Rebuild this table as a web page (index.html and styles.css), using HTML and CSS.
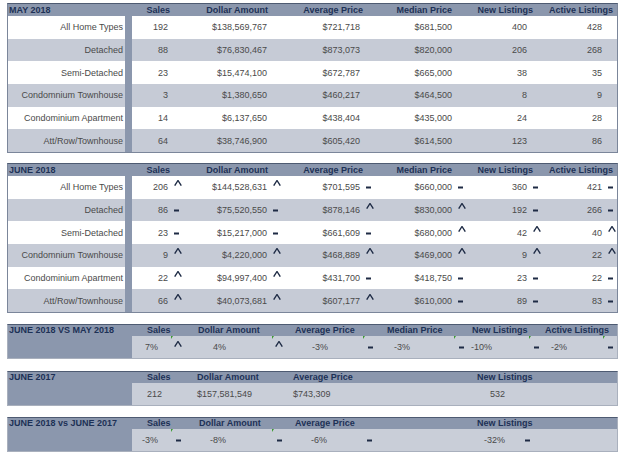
FILE: index.html
```html
<!DOCTYPE html>
<html>
<head>
<meta charset="utf-8">
<link rel="stylesheet" href="styles.css">
</head>
<body>
<svg class="defs" aria-hidden="true"><symbol id="up" viewBox="0 0 8 6"><path d="M0.7 5.7 L4 0.5 L7.3 5.7" fill="none" stroke="currentColor" stroke-width="1.35"/></symbol></svg>

<div class="tbl">
  <div class="thead"><div class="t">MAY 2018</div><div>Sales</div><div>Dollar Amount</div><div>Average Price</div><div>Median Price</div><div>New Listings</div><div>Active Listings</div><div></div></div>
  <div class="tbody">
    <div class="trow"><div class="lbl">All Home Types</div><div class="sep"></div><div class="v">192</div><div class="i"></div><div class="v">$138,569,767</div><div class="i"></div><div class="v">$721,718</div><div class="i"></div><div class="v">$681,500</div><div class="i"></div><div class="v">400</div><div class="i"></div><div class="v">428</div><div class="i"></div></div>
    <div class="trow"><div class="lbl">Detached</div><div class="sep"></div><div class="v">88</div><div class="i"></div><div class="v">$76,830,467</div><div class="i"></div><div class="v">$873,073</div><div class="i"></div><div class="v">$820,000</div><div class="i"></div><div class="v">206</div><div class="i"></div><div class="v">268</div><div class="i"></div></div>
    <div class="trow"><div class="lbl">Semi-Detached</div><div class="sep"></div><div class="v">23</div><div class="i"></div><div class="v">$15,474,100</div><div class="i"></div><div class="v">$672,787</div><div class="i"></div><div class="v">$665,000</div><div class="i"></div><div class="v">38</div><div class="i"></div><div class="v">35</div><div class="i"></div></div>
    <div class="trow"><div class="lbl">Condomnium Townhouse</div><div class="sep"></div><div class="v">3</div><div class="i"></div><div class="v">$1,380,650</div><div class="i"></div><div class="v">$460,217</div><div class="i"></div><div class="v">$464,500</div><div class="i"></div><div class="v">8</div><div class="i"></div><div class="v">9</div><div class="i"></div></div>
    <div class="trow"><div class="lbl">Condominium Apartment</div><div class="sep"></div><div class="v">14</div><div class="i"></div><div class="v">$6,137,650</div><div class="i"></div><div class="v">$438,404</div><div class="i"></div><div class="v">$435,000</div><div class="i"></div><div class="v">24</div><div class="i"></div><div class="v">28</div><div class="i"></div></div>
    <div class="trow"><div class="lbl">Att/Row/Townhouse</div><div class="sep"></div><div class="v">64</div><div class="i"></div><div class="v">$38,746,900</div><div class="i"></div><div class="v">$605,420</div><div class="i"></div><div class="v">$614,500</div><div class="i"></div><div class="v">123</div><div class="i"></div><div class="v">86</div><div class="i"></div></div>
  </div>
</div>

<div class="tbl">
  <div class="thead"><div class="t">JUNE 2018</div><div>Sales</div><div>Dollar Amount</div><div>Average Price</div><div>Median Price</div><div>New Listings</div><div>Active Listings</div><div></div></div>
  <div class="tbody">
    <div class="trow"><div class="lbl">All Home Types</div><div class="sep"></div><div class="v">206</div><div class="i"><svg class="up"><use href="#up"/></svg></div><div class="v">$144,528,631</div><div class="i"><svg class="up"><use href="#up"/></svg></div><div class="v">$701,595</div><div class="i"><span class="dn"></span></div><div class="v">$660,000</div><div class="i"><span class="dn"></span></div><div class="v">360</div><div class="i"><span class="dn"></span></div><div class="v">421</div><div class="i"><span class="dn"></span></div></div>
    <div class="trow"><div class="lbl">Detached</div><div class="sep"></div><div class="v">86</div><div class="i"><span class="dn"></span></div><div class="v">$75,520,550</div><div class="i"><span class="dn"></span></div><div class="v">$878,146</div><div class="i"><svg class="up"><use href="#up"/></svg></div><div class="v">$830,000</div><div class="i"><svg class="up"><use href="#up"/></svg></div><div class="v">192</div><div class="i"><span class="dn"></span></div><div class="v">266</div><div class="i"><span class="dn"></span></div></div>
    <div class="trow"><div class="lbl">Semi-Detached</div><div class="sep"></div><div class="v">23</div><div class="i"><span class="dn"></span></div><div class="v">$15,217,000</div><div class="i"><span class="dn"></span></div><div class="v">$661,609</div><div class="i"><span class="dn"></span></div><div class="v">$680,000</div><div class="i"><svg class="up"><use href="#up"/></svg></div><div class="v">42</div><div class="i"><svg class="up"><use href="#up"/></svg></div><div class="v">40</div><div class="i"><svg class="up"><use href="#up"/></svg></div></div>
    <div class="trow"><div class="lbl">Condomnium Townhouse</div><div class="sep"></div><div class="v">9</div><div class="i"><svg class="up"><use href="#up"/></svg></div><div class="v">$4,220,000</div><div class="i"><svg class="up"><use href="#up"/></svg></div><div class="v">$468,889</div><div class="i"><svg class="up"><use href="#up"/></svg></div><div class="v">$469,000</div><div class="i"><svg class="up"><use href="#up"/></svg></div><div class="v">9</div><div class="i"><svg class="up"><use href="#up"/></svg></div><div class="v">22</div><div class="i"><svg class="up"><use href="#up"/></svg></div></div>
    <div class="trow"><div class="lbl">Condominium Apartment</div><div class="sep"></div><div class="v">22</div><div class="i"><svg class="up"><use href="#up"/></svg></div><div class="v">$94,997,400</div><div class="i"><svg class="up"><use href="#up"/></svg></div><div class="v">$431,700</div><div class="i"><span class="dn"></span></div><div class="v">$418,750</div><div class="i"><span class="dn"></span></div><div class="v">23</div><div class="i"><span class="dn"></span></div><div class="v">22</div><div class="i"><span class="dn"></span></div></div>
    <div class="trow"><div class="lbl">Att/Row/Townhouse</div><div class="sep"></div><div class="v">66</div><div class="i"><svg class="up"><use href="#up"/></svg></div><div class="v">$40,073,681</div><div class="i"><svg class="up"><use href="#up"/></svg></div><div class="v">$607,177</div><div class="i"><svg class="up"><use href="#up"/></svg></div><div class="v">$610,000</div><div class="i"><span class="dn"></span></div><div class="v">89</div><div class="i"><span class="dn"></span></div><div class="v">83</div><div class="i"><span class="dn"></span></div></div>
  </div>
</div>

<div class="sum s1">
  <div class="st">JUNE 2018 VS MAY 2018</div>
  <div class="sh"><div>Sales</div><div>Dollar Amount</div><div>Average Price</div><div>Median Price</div><div>New Listings</div><div>Active Listings</div></div>
  <div class="sd">
    <div class="v">7%</div><div class="ci"><div class="box g"><svg class="up"><use href="#up"/></svg></div></div>
    <div class="v">4%</div><div class="ci"><div class="box g"><svg class="up"><use href="#up"/></svg></div></div>
    <div class="v">-3%</div><div class="ci"><div class="box g"><span class="dn"></span></div></div>
    <div class="v">-3%</div><div class="ci"><div class="box g"><span class="dn"></span></div></div>
    <div class="v">-10%</div><div class="ci"><div class="box g"><span class="dn"></span></div></div>
    <div class="v">-2%</div><div class="ci"><div class="box g"><span class="dn"></span></div></div>
  </div>
</div>

<div class="sum s2">
  <div class="st">JUNE 2017</div>
  <div class="sh"><div>Sales</div><div>Dollar Amount</div><div>Average Price</div><div>New Listings</div></div>
  <div class="sd"><div>212</div><div>$157,581,549</div><div>$743,309</div><div class="nl">532</div></div>
</div>

<div class="sum s3">
  <div class="st">JUNE 2018 vs JUNE 2017</div>
  <div class="sh"><div>Sales</div><div>Dollar Amount</div><div>Average Price</div><div>New Listings</div></div>
  <div class="sd">
    <div class="v">-3%</div><div class="ci"><div class="box g"><span class="dn"></span></div></div>
    <div class="v">-8%</div><div class="ci"><div class="box g"><span class="dn"></span></div></div>
    <div class="v">-6%</div><div class="ci"><div class="box"><span class="dn"></span></div></div>
    <div class="v">-32%</div><div class="ci"><div class="box"><span class="dn"></span></div></div>
  </div>
</div>
</body>
</html>
```

FILE: styles.css
```css
* { box-sizing: border-box; margin: 0; padding: 0; }

body {
  font-family: "Liberation Sans", Arial, sans-serif;
  font-size: 9px;
  color: #4a4a4a;
  background: #fff;
  padding: 3px 0 0 7px;
  width: 631px;
}

.defs { position: absolute; width: 0; height: 0; overflow: hidden; }

.tbl {
  width: 611px;
  border: 1px solid #7b869a;
  border-top-color: #4e5b72;
}
.tbl + .tbl { margin-top: 10px; }

.thead {
  display: grid;
  grid-template-columns: 124px 38px 98px 95px 89px 81px 80px 1fr;
  height: 12px;
  align-items: center;
  background: #8b97ad;
  color: #1d3156;
  font-weight: bold;
  white-space: nowrap;
}
.thead > div { text-align: right; }
.thead > .t { text-align: left; padding-left: 1px; }

.trow {
  display: grid;
  grid-template-columns: 117px 7px 36px 15px 84px 15px 78px 15px 77px 15px 60px 15px 60px 15px;
  height: 22.67px;
  align-items: center;
  background: #fff;
}
.trow:nth-child(even) { background: #c6cbd6; }

.lbl { text-align: right; padding-right: 2px; white-space: nowrap; }
.sep { align-self: stretch; background: #8b97ad; }

.v { text-align: right; white-space: nowrap; }

.i {
  align-self: stretch;
  display: flex;
  align-items: center;
  padding-left: 6px;
}

.up {
  width: 8px;
  height: 6px;
  color: #1e2b45;
  transform: translateY(-4px);
}

.dn {
  display: block;
  width: 5px;
  height: 2px;
  background: #1e2b45;
  transform: translateY(0.5px);
}

.sum {
  display: grid;
  grid-template-columns: 124px 1fr;
  grid-template-rows: 11px 22px;
  width: 611px;
  margin-top: 11px;
  background: #8b97ad;
  border: 1px solid #a9b0bd;
  border-top-color: #4e5b72;
}
.s2 { margin-top: 12px; }

.st {
  grid-column: 1;
  grid-row: 1;
  padding-left: 1px;
  font-weight: bold;
  color: #1d3156;
  display: flex;
  align-items: center;
  white-space: nowrap;
}

.sh {
  grid-column: 2;
  grid-row: 1;
  display: grid;
  align-items: center;
  padding-left: 15px;
  font-weight: bold;
  color: #1d3156;
  white-space: nowrap;
}

.sd {
  grid-column: 2;
  grid-row: 2;
  display: grid;
  align-items: center;
  background: #c9ced8;
  white-space: nowrap;
}

.s1 .sh { grid-template-columns: 51px 97px 92px 85px 73px 1fr; }
.s1 .sd { grid-template-columns: 26px 27px 41px 60px 42px 49px 33px 58px 24px 51px 24px 50px; }

.s2 .sh { grid-template-columns: 50px 96px 184px 1fr; }
.s2 .sd { grid-template-columns: 50px 96px 184px 1fr; padding-left: 15px; }
.s2 .nl { padding-left: 13px; }

.s3 .sh { grid-template-columns: 52px 96px 182px 1fr; }
.s3 .sd { grid-template-columns: 26px 27px 41px 60px 41px 49px 129px 29px 1fr; }

.ci {
  align-self: stretch;
  display: flex;
  justify-content: flex-end;
}
.box {
  width: 14px;
  position: relative;
  display: flex;
  align-items: center;
  justify-content: center;
}
.box.g::before {
  content: "";
  position: absolute;
  top: 0;
  left: 0;
  border-top: 3px solid #3c9a31;
  border-right: 2px solid transparent;
}
.sd .up { transform: translateY(-3px); }
```
